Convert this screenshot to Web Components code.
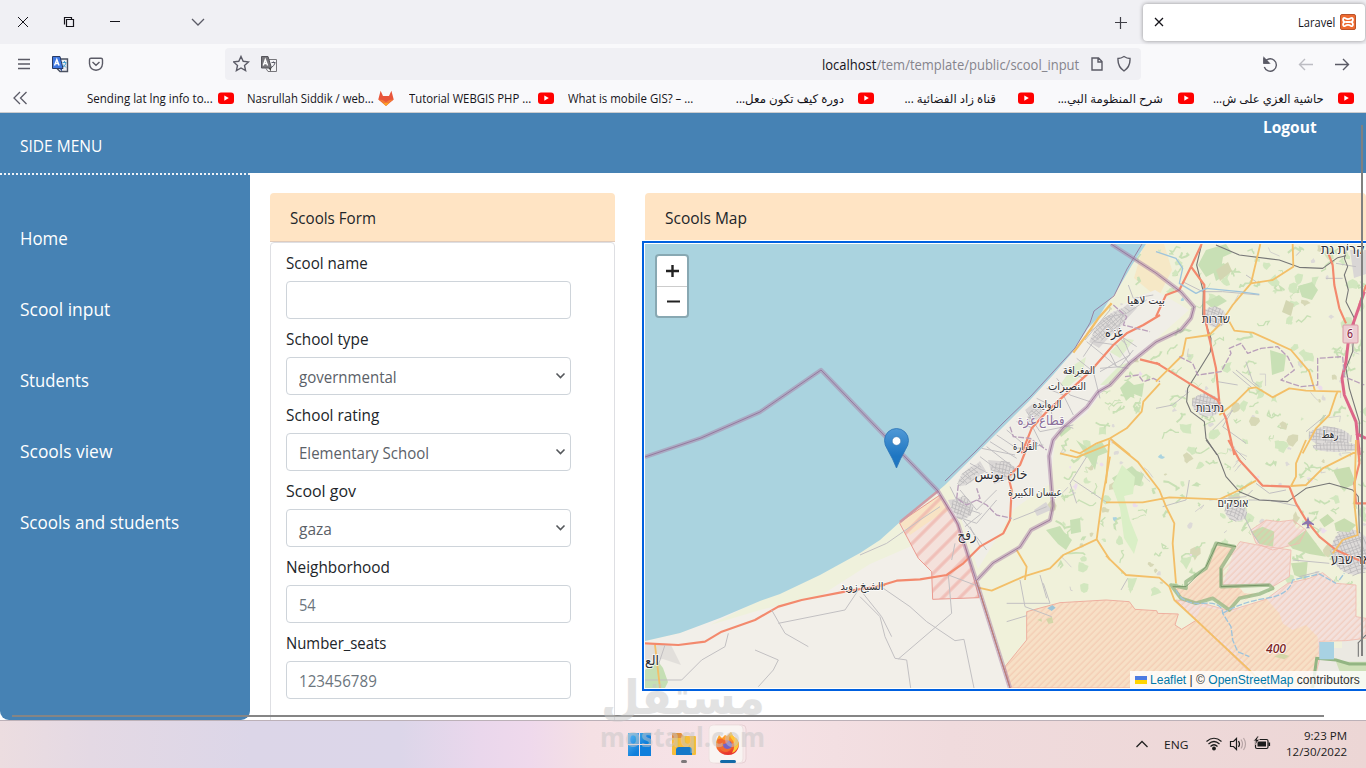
<!DOCTYPE html>
<html lang="en">
<head>
<meta charset="utf-8">
<title>Laravel</title>
<style>
  body {
    margin: 0;
    width: 1366px;
    height: 768px;
    overflow: hidden;
    font-family: "Open Sans", "Noto Sans", "DejaVu Sans", sans-serif;
    font-size: 15.5px;
    color: #212529;
    background: #fff;
  }
</style>
</head>
<body>
<app-desktop></app-desktop>

<script>
/**
 * Registers a custom element that only renders a template.
 *
 * @param {string} name - The tag name.
 * @param {string} html - The shadow root markup.
 */
function defineStatic (name, html) {
  const template = document.createElement('template')
  template.innerHTML = html
  customElements.define(name, class extends HTMLElement {
    constructor () {
      super()
      this.attachShadow({ mode: 'open' })
        .appendChild(template.content.cloneNode(true))
    }
  })
}

/**
 * A single line of text which is squeezed or stretched to a given width.
 */
customElements.define('fit-text',
  class extends HTMLElement {
    constructor () {
      super()
      this.attachShadow({ mode: 'open' }).innerHTML = `
        <style>
          :host { display: inline-block; white-space: nowrap; }
          span { display: inline-block; transform-origin: 0 50%; }
        </style>
        <span><slot></slot></span>`
    }

    /**
     * Measures the text and scales it.
     */
    connectedCallback () {
      const width = Number(this.getAttribute('w'))
      const span = this.shadowRoot.querySelector('span')
      this.style.width = `${width}px`
      const natural = span.offsetWidth
      if (natural) {
        span.style.transform = `scaleX(${width / natural})`
      }
    }
  })

/* ------------ BROWSER ----------- */

defineStatic('browser-tabs', `
  <style>
    :host { display: flex; height: 44px; background: #f0f0f4; align-items: center; box-sizing: border-box; }
    svg { display: block; fill: none; stroke: #15141a; }
    .left { flex: 1; }
    .tab {
      display: flex; align-items: center; box-sizing: border-box;
      width: 222px; height: 37px; margin-right: 1px; padding: 0 9px 0 11px;
      background: #fff; border-radius: 4px; box-shadow: 0 0 4px rgba(0, 0, 0, .4);
      font-size: 12px;
    }
    fit-text { margin: 1px 5px 0 auto; color: #15141a; }
  </style>
  <svg class="left" width="1142" height="44" viewBox="0 0 1142 44" preserveAspectRatio="xMinYMid">
    <path d="M18 17l10 10M28 17L18 27"/>
    <path d="M66.500 19.500h7v7h-7zM64.500 24.500v-7h7v2" stroke-width="1.200"/>
    <path d="M110 21.500h10"/>
    <path d="M192 19l6 6 6-6" stroke="#5b5b66" stroke-width="1.300"/>
    <path d="M1115 22.500h12M1120.500 17v12" stroke="#3f3e46" stroke-width="1.200"/>
  </svg>
  <div class="tab">
    <svg width="10" height="10"><path d="M1 1l8 8M9 1L1 9" stroke-width="1.300"/></svg>
    <fit-text w="37">Laravel</fit-text>
    <svg width="16" height="16" viewBox="0 0 16 16" stroke="none">
      <rect x=".5" y=".5" width="15" height="15" rx="1.500" fill="#ee6a30" stroke="#b9532c"/>
      <path d="M5.300 4.300C2.600 2.600 2.200 7.200 5 8c-2.800.8-2.400 5.400.3 3.700 1.800-1.200 3.600-1.200 5.400 0 2.700 1.700 3.100-2.900.3-3.700 2.800-.8 2.400-5.400-.3-3.700-1.800 1.200-3.600 1.200-5.400 0z" stroke="#fff" stroke-width="1.800"/>
      <path d="M5.500 8h5" stroke="#fff" stroke-width="2"/>
    </svg>
  </div>
`)

defineStatic('browser-toolbar', `
  <style>
    :host { display: flex; height: 40px; background: #f9f9fb; align-items: center; }
    svg { display: block; fill: none; stroke: #5b5b66; stroke-width: 1.400; }
    .bar {
      display: flex; align-items: center; justify-content: space-between; box-sizing: border-box;
      width: 916px; height: 32px; border-radius: 4px; background: #f0f0f4; padding: 0 8px;
    }
    .url { display: flex; align-items: center; gap: 12px; font-size: 14px; color: #85848c; }
    b { font-weight: 400; color: #15141a; }
  </style>
  <svg width="225" height="40">
    <path d="M18 15.500h12M18 20h12M18 24.500h12"/>
    <path d="M60 15h7.500v12.500H60l-3-3" fill="#eceef2" stroke="#4b5160"/>
    <path d="M52.500 12.500h7.500l3 12H52.500z" fill="#4078e0" stroke="#293a63" stroke-width="1"/>
    <path d="M59.500 24.500l2.500 3v-3" fill="#2a4a94" stroke="none"/>
    <path d="M54.500 21.500l2.300-6 2.300 6M55.500 19.500h3" stroke="#fff"/>
    <path d="M62.500 18.500h4M64.500 17v1.500M66 19q-1 3-3 4M63 20.500l3 3" stroke="#45a0d4" stroke-width="1"/>
    <path d="M91 14.200h10q1.500 0 1.500 1.500v4q-.5 6-6.500 6.500-6-.5-6.500-6.500v-4q0-1.500 1.500-1.500zM92.500 18l3.500 3.300 3.500-3.300"/>
  </svg>
  <div class="bar">
    <svg width="46" height="20">
      <path d="M8 2.500l2.200 4.800 5.200.6-3.900 3.500 1.100 5.200L8 14l-4.600 2.600 1.100-5.200L.6 7.900l5.200-.6z"/>
      <path d="M36 5.500h7.500v12H35l-2-3" fill="#f3f3f5" stroke="#77767b" stroke-width="1"/>
      <path d="M28.500 2.500H35L38.500 14h-10z" fill="#77767b" stroke="#55545a" stroke-width="1"/>
      <path d="M35.500 14l2.500 3.500V14" fill="#444" stroke="none"/>
      <path d="M30.300 11.500l2-6 2.300 6M31.300 9.500h3" stroke="#fff"/>
      <path d="M38.500 8.500h4M40.500 7.500v1M42 9q-1 3-3 4" stroke-width="1"/>
    </svg>
    <div class="url">
      <fit-text w="257"><b>localhost</b>/tem/template/public/scool_input</fit-text>
      <svg width="12" height="14"><path d="M1 1h6.500L11 4.500V13H1zM7 1v4h4"/></svg>
      <svg width="16" height="18" style="margin-left:2px"><path d="M7 1.500q3 2 6 2 .5 8-6 12.500Q.5 11.500 1 3.500q3 0 6-2z"/></svg>
    </div>
  </div>
  <svg width="225" height="40">
    <path d="M123.500 18.500a6.200 6.200 0 1 1-.2 4.500M123 14v5h5"/>
    <path d="M123 14v5h5z" fill="#5b5b66"/>
    <path d="M172 20.500h-13.500M164 15l-5.500 5.500 5.500 5.500" stroke="#bdbdc3"/>
    <path d="M194 20.500h13.500M202 15l5.500 5.500-5.500 5.500"/>
  </svg>
`)

const bookmarkIcons = {
  youtube: '<rect y="2.500" width="16" height="11.500" rx="3" fill="#f00"/><path d="M6.300 5.500v5.200l4.500-2.600z" fill="#fff"/>',
  gitlab: '<path d="M8 16L.3 9.500 2.600.8 5 6h6L13.400.8l2.300 8.700z" fill="#e8553a"/><path d="M8 16l-4-4 4 1 4-1z" fill="#fca326"/><path d="M.3 9.500L4 12l4 1 4-1 3.700-2.500-4.300.5L8 12l-3.400-2z" fill="#f47b35"/>',
  none: ''
}

/**
 * A bookmark with its icon behind the text.
 */
customElements.define('book-mark',
  class extends HTMLElement {
    constructor () {
      super()
      this.attachShadow({ mode: 'open' })
    }

    connectedCallback () {
      this.shadowRoot.innerHTML = `
        <style>
          :host { display: flex; align-items: center; justify-content: flex-end; gap: var(--gap); padding-right: 2px; }
          div { font-size: 11.800px; white-space: nowrap; }
          svg { flex: none; }
        </style>
        <div><slot></slot></div>
        <svg width="16" height="16">${bookmarkIcons[this.getAttribute('icon')]}</svg>`
    }
  })

defineStatic('bookmarks-bar', `
  <style>
    :host {
      display: grid; grid-template-columns: 76px repeat(8, 160px); box-sizing: border-box;
      height: 29px; background: #f9f9fb; border-bottom: 1px solid #ccccce; color: #15141a;
    }
    svg { fill: none; stroke: #5b5b66; stroke-width: 1.300; }
  </style>
  <svg width="76" height="28"><path d="M20 8l-6 6 6 6M26.500 8l-6 6 6 6"/></svg>
  <book-mark icon="youtube" style="--gap:5px"><fit-text w="126">Sending lat lng info to...</fit-text></book-mark>
  <book-mark icon="gitlab" style="--gap:4px"><fit-text w="127">Nasrullah Siddik / web...</fit-text></book-mark>
  <book-mark icon="youtube" style="--gap:7px"><fit-text w="122">Tutorial WEBGIS PHP ...</fit-text></book-mark>
  <book-mark icon="none" style="--gap:5px"><fit-text w="125">What is mobile GIS? – ...</fit-text></book-mark>
  <book-mark icon="youtube" style="--gap:14px"><fit-text w="108" dir="rtl">دورة كيف تكون معل...</fit-text></book-mark>
  <book-mark icon="youtube" style="--gap:22px"><fit-text w="92" dir="rtl">قناة زاد الفضائية ...</fit-text></book-mark>
  <book-mark icon="youtube" style="--gap:15px"><fit-text w="105" dir="rtl">شرح المنظومة البي...</fit-text></book-mark>
  <book-mark icon="youtube" style="--gap:12px"><fit-text w="111" dir="rtl">حاشية الغزي على ش...</fit-text></book-mark>
`)

/* ------------ PAGE ----------- */

defineStatic('page-header', `
  <style>
    :host { display: flex; justify-content: space-between; box-sizing: border-box; height: 60px; padding: 0 49px 0 20px; background: #4682b4; color: #fff; }
    .title { line-height: 67px; font-size: 15.500px; }
    .out { line-height: 28px; font-weight: 700; }
  </style>
  <fit-text class="title" w="82">SIDE MENU</fit-text>
  <fit-text class="out" w="54">Logout</fit-text>
`)

defineStatic('side-menu', `
  <style>
    :host {
      display: flex; flex-direction: column; align-items: flex-start; box-sizing: border-box;
      width: 250px; height: 547px; padding: 28px 20px 0;
      background: #4682b4; color: #fff; border-top: 2px dotted #eef3f8; border-radius: 0 0 9px 9px;
    }
    fit-text { height: 71px; line-height: 71px; font-size: 17.600px; }
  </style>
  <fit-text w="48">Home</fit-text>
  <fit-text w="90">Scool input</fit-text>
  <fit-text w="69">Students</fit-text>
  <fit-text w="92">Scools view</fit-text>
  <fit-text w="159">Scools and students</fit-text>
`)

defineStatic('titled-card', `
  <style>
    :host { display: block; flex: none; }
    header {
      box-sizing: border-box; height: 49px; padding: 0 20px; line-height: 51px;
      background: #ffe4c4; border-bottom: 1px solid #e0cbbb; border-radius: 4px 4px 0 0;
    }
  </style>
  <header><slot name="title"></slot></header>
  <slot></slot>
`)

/**
 * A labelled field. The kind attribute is input or select.
 */
defineStatic('form-field', `
  <style>
    :host { display: block; height: 76px; }
    .label { height: 29px; line-height: 23px; }
    .box {
      display: flex; align-items: center; justify-content: space-between; box-sizing: border-box;
      width: 285px; height: 38px; padding: 2px 4px 0 12px;
      border: 1px solid #ced4da; border-radius: 4px; color: #6c757d;
    }
    :host([kind="select"]) .box { color: #5b6168; }
    svg { display: none; }
    :host([kind="select"]) svg { display: block; margin-top: -2px; }
  </style>
  <div class="label"><slot name="label"></slot></div>
  <div class="box">
    <slot></slot>
    <svg width="11" height="8" fill="none" stroke="#55585c" stroke-width="1.600"><path d="M1.500 1.500l4 4 4-4"/></svg>
  </div>
`)

defineStatic('school-form', `
  <style>
    :host {
      display: block; box-sizing: border-box; height: 500px; padding: 9px 15px;
      border: 1px solid #dedfe3; border-radius: 4px 4px 0 0;
    }
  </style>
  <form-field><fit-text slot="label" w="82">Scool name</fit-text></form-field>
  <form-field kind="select"><fit-text slot="label" w="83">School type</fit-text><fit-text w="98">governmental</fit-text></form-field>
  <form-field kind="select"><fit-text slot="label" w="93">School rating</fit-text><fit-text w="130">Elementary School</fit-text></form-field>
  <form-field kind="select"><fit-text slot="label" w="70">Scool gov</fit-text><fit-text w="33">gaza</fit-text></form-field>
  <form-field><fit-text slot="label" w="104">Neighborhood</fit-text><fit-text w="17">54</fit-text></form-field>
  <form-field><fit-text slot="label" w="100">Number_seats</fit-text><fit-text w="78">123456789</fit-text></form-field>
`)

/* ------------ MAP ----------- */

/**
 * Pseudo random numbers with a fixed seed, so the map is always the same.
 */
let seed = 11
function random () {
  seed = (seed * 16807) % 2147483647
  return seed / 2147483647
}

/**
 * Makes woods, wadis and villages spread over the farmland.
 *
 * @returns {string} SVG markup.
 */
function makeLandcover () {
  let out = ''
  for (let i = 0; i < 400; i++) {
    const x = 1050 + random() * 320
    const y = 246 + random() * 350
    const kind = random()
    if (kind < 0.45) {
      let d = `M${x.toFixed(1)} ${y.toFixed(1)}`
      for (let j = 0; j < 6; j++) {
        d += `l${(random() * 7 - 2).toFixed(1)} ${(random() * 7 - 4).toFixed(1)}`
      }
      out += `<path d="${d}" fill="none" stroke="#c8e0b5" stroke-width="${(0.7 + random() * 1.5).toFixed(1)}"/>`
    } else if (kind < 0.52) {
      const dx = random() * 24 - 12
      const dy = random() * 24 - 12
      out += `<path d="M${x} ${y}l${dx} ${dy}l${dy / 2} ${dx / 2}" fill="none" stroke="#cdcaca" stroke-width=".8"/>`
    } else {
      const color = kind < 0.76 ? '#d2e7bf' : kind < 0.84 ? '#d7d8b6' : kind < 0.95 ? '#dddad8' : kind < 0.98 ? '#ecdcec' : '#aad3df'
      const s = kind < 0.84 ? 1.5 + random() * 5 : 1.2 + random() * 2
      let points = ''
      for (let a = 0; a < 8; a++) {
        const r = s * (0.4 + random() * 0.9)
        points += `${(x + r * Math.cos(a * 0.785)).toFixed(1)},${(y + r * Math.sin(a * 0.785)).toFixed(1)} `
      }
      out += `<polygon points="${points}" fill="${color}"/>`
    }
  }
  return out
}

/**
 * Makes a small crooked street grid.
 *
 * @param {number} x - Centre x.
 * @param {number} y - Centre y.
 * @param {number} w - Width.
 * @param {number} h - Height.
 * @param {number} angle - Rotation in degrees.
 * @returns {string} SVG markup.
 */
function makeTown (x, y, w, h, angle) {
  let d = ''
  for (let i = -w / 2; i <= w / 2; i += 3.5) {
    const reach = h / 2 * Math.sqrt(Math.max(0.15, 1 - (i / w * 2) ** 2))
    d += `M${i} ${-reach}L${i + random() * 3 - 1} ${reach * (0.4 + random() * 0.6)}`
  }
  for (let i = -h / 2; i <= h / 2; i += 3.5) {
    const reach = w / 2 * Math.sqrt(Math.max(0.15, 1 - (i / h * 2) ** 2))
    d += `M${-reach} ${i}Q0 ${i + random() * 4 - 2} ${reach * (0.5 + random() * 0.5)} ${i + random() * 2}`
  }
  return `<g transform="translate(${x} ${y}) rotate(${angle})">
    <ellipse rx="${w / 2}" ry="${h / 2}" fill="#dedbd9"/>
    <path d="${d}" fill="none" stroke="#bcbabb" stroke-width=".8"/></g>`
}

/**
 * Makes a place name, set to the given width around x.
 */
function placeName (x, y, width, size, text, color = '#2e2e33') {
  return `<text x="${x}" y="${y}" font-size="${size}" textLength="${width}" lengthAdjust="spacingAndGlyphs" fill="${color}">${text}</text>`
}

defineStatic('school-map', `
  <style>
    :host {
      display: block; position: relative; width: 721px; height: 444px; margin: 2px 0 0; background: #f0f1da;
      outline: 2px solid #0060df; outline-offset: 1px; box-shadow: 0 0 0 4px #fff;
    }
    .map { display: block; }
    .map text { text-anchor: middle; font-family: "Noto Sans", "DejaVu Sans", sans-serif; font-weight: 500; paint-order: stroke; stroke: #fff; stroke-opacity: .7; stroke-width: 2px; stroke-linejoin: round; }
    .road { fill: none; stroke-linejoin: round; }
    .minor { stroke: #c2c0c2; stroke-width: 3; }
    .yellow { stroke: #f3bf68; stroke-width: 5.500; }
    .red { stroke: #f3896d; stroke-width: 6.500; }
    .rail { stroke: #777; stroke-width: 3.300; }
    .mway { stroke: #dd6689; stroke-width: 9; }
    .river { fill: none; stroke: #9ec4dc; stroke-width: 4; }
    .wide { fill: none; stroke: #a981a8; stroke-opacity: .5; stroke-width: 4.300; stroke-linejoin: round; }
    .line { fill: none; stroke: #8f6790; stroke-opacity: .75; stroke-width: 1; stroke-linejoin: round; }
    .dash { fill: none; stroke: #b99fba; stroke-width: 4; stroke-dasharray: 18 5; }
    .green { fill: #c8e0b5; }
    .zoom {
      position: absolute; left: 10px; top: 10px; width: 30px; border: 2px solid rgba(0, 0, 0, .2);
      border-radius: 4px; background: #fff; background-clip: padding-box;
    }
    .zoom svg { display: block; fill: none; stroke: #222; stroke-width: 2; }
    .zoom svg + svg { border-top: 1px solid #ccc; }
    .marker { position: absolute; left: 239px; top: 184px; }
    .credit {
      position: absolute; right: 0; bottom: 0; display: flex; align-items: center; gap: 3px; box-sizing: border-box;
      width: 236px; height: 17px; padding: 0 5px; background: rgba(255, 255, 255, .8);
      font: 12px "Liberation Sans", Arial, sans-serif; color: #333;
    }
    a { color: #0078a8; }
  </style>
  <svg class="map" width="721" height="444" viewBox="645 244 721 444">
    <defs>
      <pattern id="wideHatch" width="36" height="36" patternUnits="userSpaceOnUse" patternTransform="rotate(45)"><path d="M6 0v36" stroke="#eeb4ac" stroke-opacity=".75" stroke-width="10"/></pattern>
      <pattern id="hatch" width="14" height="14" patternUnits="userSpaceOnUse" patternTransform="rotate(45)"><path d="M6 0v14" stroke="#efb9a2" stroke-width="2"/></pattern>
    </defs>
    <rect x="645" y="244" width="721" height="444" fill="#f0f1da"/>
    <path d="M1144 244h20l8 26 -14 28 -24 -20z" fill="#f6e8c6"/>
    ${makeLandcover()}
    <path class="green" d="M1206 250l20 -6 6 9 -9 4 -2 12 -15 8 -8 -12zM1212 268l12 -5 6 9 -14 9zM1205 302l14 -7 8 6 -14 8zM1270 350l16 5 -2 16 -12 4zM1120 388l8 -8 6 5 10 -2 -2 14 -8 -3 -8 7zM1046 530l14 -4 4 6 8 8 -6 10 -8 -6zM1070 520l10 -2 1 14 -10 2zM1112 478l20 -12 5 5 7 3 -4 12 -9 -2 -7 12zM1298 286l14 -4 6 8 -6 10 -10 -3zM1076 440l12 8 14 -6 6 10 -10 4 -3 14 -7 -12zM1055 425l12 -6 4 10 -10 8z"/>
    <path d="M1216 270l12 -8 4 9 -12 10zM1286 300l8 4 -3 12 -9 -4zM1192 398l16 -4 4 9 -16 8z" fill="#d3d6b2"/>
    <path d="M1122 465l13 12 -2 17 -9 2 6 24 8 20 -4 14 -10 -16 -4 -30 -8 -22z" fill="#daefc6"/>
    <path d="M1130 300l25 -10 34 20 -25 22 -30 28 -20 16 -28 38 -30 20 -6 50 -36 25 -36 60 -30 -90 70 -80 60 -66z" fill="#f0eee7"/>
    <path d="M1060 385l14 -20 12 -8 -4 18 -14 12zM1110 352l14 -14 10 2 -14 18zM1100 385l20 -20 14 -4 -28 24z" fill="#e0edcd"/>
    <g fill="#d9d6d5">
      <path d="M1095 330l34 -27 8 5 -38 40 -10 -6zM1025 410l10 -8 8 14 -10 5zM962 479l18 -18 6 10 -16 12zM988 460l22 2 2 16 -18 6zM948 500l14 -2 2 12 -10 4zM1034 510l12 -8 5 8 -14 6zM1350 250h16v24l-12 4z"/>
    </g>
    ${makeTown(1110, 325, 46, 17, -42)}
    ${makeTown(1036, 413, 24, 10, -48)}
    ${makeTown(970, 475, 30, 12, -42)}
    ${makeTown(1004, 470, 24, 16, 10)}
    ${makeTown(962, 508, 22, 22, 20)}
    ${makeTown(1215, 317, 24, 20, 20)}
    ${makeTown(1207, 405, 30, 22, 10)}
    ${makeTown(1330, 437, 42, 20, 5)}
    ${makeTown(1236, 512, 22, 18, 20)}
    ${makeTown(1352, 552, 40, 46, -20)}
    ${makeTown(1336, 447, 46, 10, 0)}
    ${makeTown(868, 590, 20, 8, 20)}

    <path d="M1366 640h-24v8h-23v14l-4 26h51z" fill="#ebe9e2"/>
    <path d="M938 491l18 24 20 65 34 108H645v-47l35 -8 80 -33 100 -47z" fill="#f2efe9"/>
    <path d="M938 491l-20 20 -18 11 -40 31 -110 52 -40 20 50 -15 60 -14 50 -32 46 -20z" fill="#eff1dc"/>
    <path d="M645 670l12 -10 6 8 5 14 -3 6h-20z" fill="#c5dfb4"/>
    <path d="M645 645h26l10 20 -18 -6 -18 2z" fill="#e2dfdb"/>
    <g transform="translate(860 440) scale(.33333)">
      <path d="M118 248L240 165 285 235 310 300 357 473 218 478 215 395 175 355z" fill="#f4e1db"/>
      <path d="M118 248L240 165 270 210 215 240 150 285z" fill="#f8e3c4"/>
      <path d="M118 248L240 165 285 235 310 300 357 473 218 478 215 395 175 355z" fill="url(#wideHatch)" stroke="#ea9a90" stroke-width="3"/>
      <path d="M435 680L500 600V515L600 488 738 480 808 485 825 508 890 512 893 520 955 522 945 555 965 568 1010 540 1170 680V744H450z" fill="#f7e0c6"/>
      <path d="M435 680L500 600V515L600 488 738 480 808 485 825 508 890 512 893 520 955 522 945 555 965 568 1010 540 1170 680V744H450z" fill="url(#hatch)" stroke="#eeb0a0" stroke-width="3"/>
      <path d="M562 505l15 -10 10 8 -12 10z" fill="#9cc5d8"/>
      <path d="M558 538l18 -8 4 18 -14 4zM532 540l12 -5 2 10z" fill="#d3d6a8"/>
    </g>
    <g transform="translate(1106 440) scale(.33333)">
      <path d="M210 480L290 490 370 512 480 478 545 430 610 415 650 398 690 430 750 435V530L780 535V595L720 602 640 604V660L620 744H480L270 540z" fill="#f3e1dc"/>
      <path d="M285 500L380 515 480 475 520 520 530 550 560 570 600 555 635 590 638 650 620 744H490L375 625 270 540z" fill="#f7e0c6"/>
      <path d="M330 320L390 330 402 305 470 318 555 330 550 410 500 440 350 435 380 345z" fill="#f3e0dc"/>
      <path d="M435 270L480 240 520 245 560 240 570 265 600 270 580 310 500 330 450 310z" fill="#f3e0dc"/>
      <path d="M435 275l35 -15 35 15 -4 45 -40 -8zM545 310l55 -40 60 80 -50 -8 -50 -16zM555 370l50 -5 -5 55 -35 -15zM640 240l25 -18 20 20 -30 20zM680 90l50 -10 20 50 -40 20zM685 250l30 -15 35 20 -20 22 -40 -5z" fill="#c8ddb0"/>
      <path d="M195 435L240 445 300 385 330 310 385 320 345 385V440L490 435 500 445 460 462 400 475 370 510 320 475 270 490 225 475z" fill="#f7dfc6"/>
      <path d="M210 480L290 490 370 512 480 478 545 430 610 415 650 398 690 430 750 435V530L780 535V595L720 602 640 604V660L620 744H480L270 540zM402 305L470 318 555 330 550 410 500 440 350 435V380zM480 240L520 245 560 240 600 270 580 310 500 330 450 310 435 270z" fill="url(#hatch)" stroke="#efbbb0" stroke-width="2.500"/>
      <path d="M195 435L240 445 300 385 330 310 385 320 345 385V440L490 435 370 510 320 475 270 490 225 475z" fill="url(#hatch)"/>
      <path d="M400 442L490 435 500 445 460 462 415 460z" fill="#eff1dc"/>
      <path d="M195 435L240 445 240 425 300 385 330 310 385 320 345 385V440L490 435 500 445 460 462 400 475 370 510 320 475 270 490 225 475z" fill="none" stroke="#93b583" stroke-opacity=".75" stroke-width="11" stroke-linejoin="round"/>
      <path d="M200 440L240 440 300 380 335 308 390 320M345 385V440L490 435" fill="none" stroke="#6c8d5f" stroke-width="2.500"/>
      <path d="M690 665h90v79h-60z" fill="#cfe0b8"/>
      <path d="M620 744L632 655 690 660 730 672H780" fill="none" stroke="#93b583" stroke-width="9"/>
      <path d="M640 606h44v52h-44z" fill="#a8d2e3"/>
      <path d="M505 650l20 -10 25 8 -15 10z" fill="#d3d6a8"/>
      <path class="river" d="M210 450Q230 495 290 490T350 520L375 560 380 600 395 635 430 650" stroke-dasharray="18 5"/>
      <path class="river" d="M350 520Q410 485 480 475T560 420L640 402 690 430M700 420l15 -20" stroke-dasharray="18 5"/>
    </g>

    <path d="M645 244H1146L1132 265 1115 294 1108 302 1098 318 1088 328 1072 353 1053 375 1030 400 1003 427 975 455 945 485 938 491 900 522 880 540 860 553 820 575 780 594 760 601 720 618 680 633 645 641z" fill="#aad3df"/>

    <g class="road" transform="translate(950 235) scale(.33333)">
      <path class="minor" d="M420 290l60 -45 50 -10 60 -40M430 320l70 10 40 60M405 315l75 -90M430 320l-30 45M480 355l20 40 35 5M520 310l20 50 -90 50M535 150l15 40 60 -10M380 370l50 40 20 80M320 430l40 50 60 20M260 490l40 20 10 50 60 20M230 530l40 60 100 -20M140 600l60 40 80 -10M120 620l80 50M95 640l100 20M520 235l-20 60 60 40M470 270l60 60M500 230l-60 80M410 320l50 40 40 35M290 460l50 20 30 60M340 400l60 30M200 560l50 20 30 60M170 585l60 50M450 400l60 -5 40 -50"/>
      <path d="M370 353L410 300 445 250 485 205" stroke="#f3bf68" stroke-width="7"/>
      <path class="red" d="M630 240L580 270 530 295 490 330 420 410 350 475 290 530 245 580 215 655M570 373L630 388"/>
      <path class="yellow" d="M630 445L580 500 575 530 530 580 480 610 440 625 390 655 360 645M480 610L540 660"/>
      <path class="dash" d="M490 210L530 245 520 270 600 290M180 575l10 30 50 5 50 35"/>
      <path class="dash" d="M525 425l40 -5 15 20 30 -10 20 10"/>
    </g>
    <g class="road" transform="translate(1156 235) scale(.33333)">
      <path class="minor" d="M80 140l60 30 60 0 110 10M100 470L50 510 0 520M270 380l20 60 20 15M300 140l-30 -20M170 585l60 -60 -30 50 70 50M540 85l60 10M450 590l60 -50M185 440l60 10M510 130h50M230 410l60 50M300 455l-60 -50"/>
      <path class="rail" d="M137 27L122 90 142 170 140 240 165 310 163 350 120 420 95 460 92 500 105 530 145 560 150 610 183 660M180 30L250 60 370 75 430 97 500 100 545 68 570 62M575 27L565 70 575 95 565 120 577 165 570 200 595 250 590 350 570 400 580 460 610 560 610 600"/>
      <path class="red" d="M137 27L105 95 70 165 30 180 0 245M105 95L145 150 145 240 160 310 180 400 190 500M0 383L100 445 185 495 210 550 235 660M515 50L530 90 535 150 550 220 570 265M630 150L610 210"/>
      <path class="yellow" d="M313 27L285 145 230 210 190 270 160 300 90 310 80 360 30 410 0 440M285 145L350 135 412 95 410 27M220 260L235 287 290 293 350 320 405 345 460 410 477 468M190 540L240 500 280 460 300 457 350 487 400 460 450 467 555 470M545 470L540 480 520 540 480 580 440 655"/>
      <path class="mway" d="M625 170L590 270 578 310 570 380 558 430 565 480 600 560 610 660M600 595L630 610"/>
      <path class="dash" d="M70 365l40 20 15 35 70 -10 30 -55 -5 -15 35 -15 20 30 40 -15 50 -5 30 30 20 40 -40 30 60 20 50 -5V370l75 -5 5 60 60 25"/>
      <path class="river" d="M0 50L60 70 80 100 70 145 120 175 150 160 250 170 310 178" stroke-width="3"/>
    </g>
    <g class="road" transform="translate(860 440) scale(.33333)">
      <path class="minor" d="M0 345L80 310 180 240 240 200M0 470L60 530 75 590 105 655 140 660 152 744M115 657L275 520 265 405 350 437M70 445L150 500 200 545 285 602 312 598 342 744M270 140l30 60 60 20M300 150l50 60 60 -60M290 230l60 20 60 -70M330 70l90 50M360 50l80 60M380 20l90 70M315 260l50 -40M275 360l10 -50M460 240l100 -40M650 190l-20 -60 50 -80M640 120L740 187M480 420l15 80 80 30M440 490h130l-20 -60M440 545l60 -18M310 240l70 90M330 260l30 60M540 405l20 70"/>
      <path class="red" d="M50 440L110 422 180 418 260 405 310 370 360 320 430 280 450 240 455 150 445 110 480 75 510 0"/>
      <path class="yellow" d="M355 443L395 452 490 410 570 385 610 345 710 298 725 187 750 50M600 40l50 12 100 -40M470 330l30 50 -5 40M710 298L750 360"/>
      <path class="dash" d="M295 135l-5 40 30 20 40 -20 -10 -30M350 180l30 15 30 30 45 10"/>
    </g>
    <g class="road" transform="translate(1106 440) scale(.33333)">
      <path class="minor" d="M410 220l30 60 20 30M310 180l110 -10 20 -20M560 360l110 10M580 410l60 -15M45 450l20 -35M420 60l-30 -30M450 130l40 30 50 -10M170 200l70 -20 10 -60M420 180l70 0 90 20"/>
      <path class="rail" d="M300 0L335 45 360 110 400 155 460 180 545 185 600 145 670 130 740 150 757 170 760 280M757 610V650M780 585l-25 25"/>
      <path class="red" d="M367 0L400 60 450 115 470 137 550 140 570 190 600 240 640 290 690 330 780 370M755 0L760 70 745 130 750 190H780"/>
      <path class="yellow" d="M10 0L0 130M20 5L95 65 160 150 180 200 205 250 200 310 210 430M0 187H110L190 172 340 178 400 150 450 122M600 0L570 70V110L555 138 600 135 650 85 750 35M0 347L60 405 160 413 190 440 205 480 270 540 430 690 480 744M750 0L745 190 755 285 710 300 680 340"/>
    </g>
    <g class="road" transform="translate(645 590) scale(.33333)">
      <path class="red" d="M0 160L100 165 180 155 230 125 330 90 400 50 470 30 600 5 720 -15"/>
      <path class="minor" d="M0 270H110L170 210 240 170 250 130M60 165l-20 60M380 60L420 130 490 170M330 180L400 210 385 240 340 290M640 0L600 60 400 100M650 5L710 80 740 140"/>
      <path class="yellow" d="M30 165L45 294"/>
    </g>

    <path class="line" d="M1142 244l-15 25 -13 27 -20 15 -4 12 -15 25 -22 24 -22 24 -28 27 -28 29 -30 29" stroke-opacity=".6" stroke-width="2"/>
    <path d="M938 491L900 522" stroke="#cf9ba4" stroke-width="2.500"/>
    <g id="borders">
      <path class="wide" d="M645 457l56 -19 59 -26 61 -42 117 121 20 33 18 56 34 108M1111 244l45 29 25 19 13 15 -3 11 -10 12 -25 12 -26 21 -20 22 -12 7 -11 15 -24 21 -10 12 -4 16 4 50 -3 14 -19 10 -11 17 -27 16 -16 17"/>
      <path class="line" d="M645 457l56 -19 59 -26 61 -42 117 121 20 33 18 56 34 108M1111 244l45 29 25 19 13 15 -3 11 -10 12 -25 12 -26 21 -20 22 -12 7 -11 15 -24 21 -10 12 -4 16 4 50 -3 14 -19 10 -11 17 -27 16 -16 17"/>
      <path d="M976 580l34 108" stroke="#c07c70" stroke-width="1"/>
    </g>

    <rect x="1343" y="325" width="15" height="18" rx="1" fill="#eccdd1" stroke="#dd9aa8"/>
    <path d="M1308 516.500l1.200 4 4.800 3.500v1.200l-4.800 -1.200 -.4 3 1.500 1.200h-4.600l1.500 -1.200 -.4 -3 -4.800 1.200V524l4.800 -3.500z" fill="#8d74ad"/>
    <g>
      ${placeName(1350, 338, 6, 12, '6', '#8b2846')}
      ${placeName(1114, 337, 18, 14, 'غزة')}
      ${placeName(1146, 304, 38, 11, 'بيت لاهيا')}
      ${placeName(1079, 374, 32, 11, 'المغراقة')}
      ${placeName(1067, 390, 38, 11, 'النصيرات')}
      ${placeName(1047, 408, 29, 11, 'الزوايده')}
      ${placeName(1041, 425, 47, 13, 'قطاع غزة', '#8b6f9a')}
      ${placeName(1025, 450, 24, 11, 'القرارة')}
      ${placeName(1001, 479, 53, 14, 'خان يونس')}
      ${placeName(1035, 496, 54, 11, 'عبسان الكبيرة')}
      ${placeName(967, 540, 19, 14, 'رفح')}
      ${placeName(862, 590, 43, 11, 'الشيخ زويد')}
      ${placeName(652, 665, 14, 13, 'الع')}
      ${placeName(1343, 254, 44, 14, 'קרית גת')}
      ${placeName(1216, 323, 28, 12, 'שדרות')}
      ${placeName(1210, 412, 28, 12, 'נתיבות')}
      ${placeName(1330, 438, 17, 11, 'رهط')}
      ${placeName(1233, 507, 31, 12, 'אופקים')}
      ${placeName(1354, 564, 46, 15, 'באר שבע')}
      <g font-style="italic">${placeName(1276, 653, 20, 12, '400', '#7b2424')}</g>
    </g>
  </svg>
  <div class="zoom">
    <svg width="30" height="30"><path d="M9 15h13M15.500 9v12" stroke-width="2.400"/></svg>
    <svg width="30" height="29"><path d="M10 14.500h13"/></svg>
  </div>
  <svg class="marker" width="25" height="41" viewBox="0 0 25 41">
    <defs><linearGradient id="pin" x2="0" y2="1"><stop offset="0" stop-color="#5099d6"/><stop offset=".7" stop-color="#1e76c2"/></linearGradient></defs>
    <path d="M12.500 40Q9 31 3.500 21.500 .5 17 .5 12.500a12 12 0 0 1 24 0q0 4.500-3 9Q16 31 12.500 40z" fill="url(#pin)" stroke="#2c74b5" stroke-width=".8"/>
    <circle cx="12.500" cy="13" r="4.300" fill="#fff" stroke="#3775ac" stroke-width=".6"/>
  </svg>
  <div class="credit">
    <svg width="12" height="8"><path fill="#4c7be1" d="M0 0h12v4H0z"/><path fill="#ffd500" d="M0 4h12v4H0z"/></svg>
    <fit-text w="210"><a>Leaflet</a> | © <a>OpenStreetMap</a> contributors</fit-text>
  </div>
`)

defineStatic('school-page', `
  <style>
    :host { display: block; position: relative; height: 607px; overflow: hidden; background: #fff; }
    .body { display: flex; }
    main { display: flex; gap: 30px; flex: 1; min-width: 0; padding: 20px 0 0 20px; }
    .form { width: 345px; }
    .map { width: 721px; }
    .vertical { position: absolute; right: 3px; top: 12px; width: 2px; height: 531px; background: #808080; }
    .horizontal { position: absolute; left: 12px; bottom: 3px; width: 1312px; height: 2px; background: #858585; }
  </style>
  <page-header></page-header>
  <div class="body">
    <side-menu></side-menu>
    <main>
      <titled-card class="form"><fit-text slot="title" w="86">Scools Form</fit-text><school-form></school-form></titled-card>
      <titled-card class="map"><fit-text slot="title" w="82">Scools Map</fit-text><school-map></school-map></titled-card>
    </main>
  </div>
  <div class="vertical"></div>
  <div class="horizontal"></div>
`)

/* ------------ DESKTOP ----------- */

defineStatic('task-bar', `
  <style>
    :host {
      display: flex; justify-content: space-between; box-sizing: border-box; height: 48px; border-top: 1px solid #bcb1b8;
      background: linear-gradient(90deg, #ecdde0 0, #e4d9e4 90px, #dcd6e8 250px, #dcd6e9 400px, #ead7ec 480px, #efd9ec 530px, #f5e0e4 590px, #f6e3e7 720px, #f0dbdd 950px, #ecd6d5 1366px);
    }
    svg { display: block; }
    .tray { display: flex; align-items: center; color: #1b1b1b; font-size: 11.500px; }
    .clock { display: flex; flex-direction: column; align-items: flex-end; line-height: 16px; margin: -1px 19px 0 14px; }
  </style>
  <svg width="760" height="47" viewBox="0 721 760 47">
    <defs>
      <linearGradient id="win" x2="1" y2="1"><stop offset="0" stop-color="#5cb8f2"/><stop offset=".6" stop-color="#0f7fdc"/></linearGradient>
      <linearGradient id="fox" x2=".2" y2="1"><stop offset="0" stop-color="#ffbd2e"/><stop offset=".5" stop-color="#ff8a2a"/><stop offset="1" stop-color="#e8352e"/></linearGradient>
    </defs>
    <path d="M628 733h11v11h-11zM640 733h11v11h-11zM628 745h11v11h-11zM640 745h11v11h-11z" fill="url(#win)"/>
    <path d="M672 734q0-1 1-1h8l3 3h11q1 0 1 1v17q0 1-1 1h-22q-1 0-1-1z" fill="#f7bd3a"/>
    <path d="M672 738v-4q0-1 1-1h8l2 3-2 2z" fill="#e08f3c"/>
    <path d="M676 755v-5q0-3 3-3h10q3 0 3 3v5z" fill="#1578c8"/>
    <rect x="681" y="760" width="6" height="3" rx="1.500" fill="#7d787a"/>
    <rect x="712" y="725" width="34" height="38" rx="4" fill="#f8e8ea" stroke="#e7d0d4"/>
    <rect x="709" y="725" width="34" height="38" rx="4" fill="#f9f4f2" stroke="#eee0e0"/>
    <path d="M717 739l2-4 3 3 3-3 2 1 4-4 2 4 4 3q3 5 1 10-3 6-10 6t-11-6q-2-5 0-10z" fill="url(#fox)"/>
    <path d="M731 732l2 4 4 3q3 5 0 10-2 3-5 4 5-9-1-15-2-3 0-6z" fill="#ffc736"/>
    <circle cx="727.500" cy="745" r="4.500" fill="#7563c5"/>
    <path d="M717 740q4-3 7 0l4 1q-1 3-5 3-1 4 4 5 3 0 5-2-2 5-7 5-7-2-8-12z" fill="#f26a30"/>
    <rect x="720" y="760" width="16" height="3" rx="1.500" fill="#126aa8"/>
  </svg>
  <div class="tray">
    <svg width="52" height="47" fill="none" stroke="#222" stroke-width="1.300"><path d="M24.500 26l5.500-5.500 5.500 5.500"/></svg>
    <fit-text w="24">ENG</fit-text>
    <svg width="84" height="47" viewBox="1188 721 84 47" fill="none" stroke="#1b1b1b" stroke-width="1.200">
      <path d="M1206.500 741.500q7.500-6.500 15 0M1208.500 744q5.500-5 11 0M1210.500 746.500q3.500-3.500 7 0"/>
      <circle cx="1214" cy="748.500" r="1.300" fill="#1b1b1b"/>
      <path d="M1230.500 741.500h3l3-3v11l-3-3h-3z"/>
      <path d="M1238.500 741q2 3 0 6"/>
      <path d="M1241 739.500q3 4.500 0 9M1243.500 738q4 6 0 12" stroke="#b7a5a6"/>
      <rect x="1255.500" y="739.500" width="12.500" height="9" rx="1.500"/>
      <rect x="1257.500" y="741.500" width="8.500" height="5" fill="#1b1b1b" stroke="none"/>
      <path d="M1269.300 742.500v3.500" stroke-width="1.600"/>
      <path d="M1257.500 736l-4 5h2.500l-1.500 4.500 5-6h-2.500l2-3.500z" fill="#1b1b1b" stroke="#ecd6d5" stroke-width=".7"/>
    </svg>
    <div class="clock"><fit-text w="43">9:23 PM</fit-text><fit-text w="61">12/30/2022</fit-text></div>
  </div>
`)

defineStatic('water-mark', `
  <style>
    :host { display: block; position: absolute; left: 595px; top: 670px; pointer-events: none; opacity: .5; }
    svg { display: block; }
    text { fill: #c6c6c6; font-weight: 700; }
  </style>
  <svg width="180" height="90">
    <text x="88" y="44" text-anchor="middle" font-family="DejaVu Sans, sans-serif" font-size="47" textLength="164" lengthAdjust="spacingAndGlyphs">مستقل</text>
    <text x="5" y="77" font-family="Open Sans, sans-serif" font-size="26" textLength="165" lengthAdjust="spacingAndGlyphs">mostaql.com</text>
  </svg>
`)

defineStatic('app-desktop', `
  <style>
    :host { display: block; position: relative; width: 1366px; height: 768px; overflow: hidden; }
  </style>
  <browser-tabs></browser-tabs>
  <browser-toolbar></browser-toolbar>
  <bookmarks-bar></bookmarks-bar>
  <school-page></school-page>
  <task-bar></task-bar>
  <water-mark></water-mark>
`)
</script>
</body>
</html>
